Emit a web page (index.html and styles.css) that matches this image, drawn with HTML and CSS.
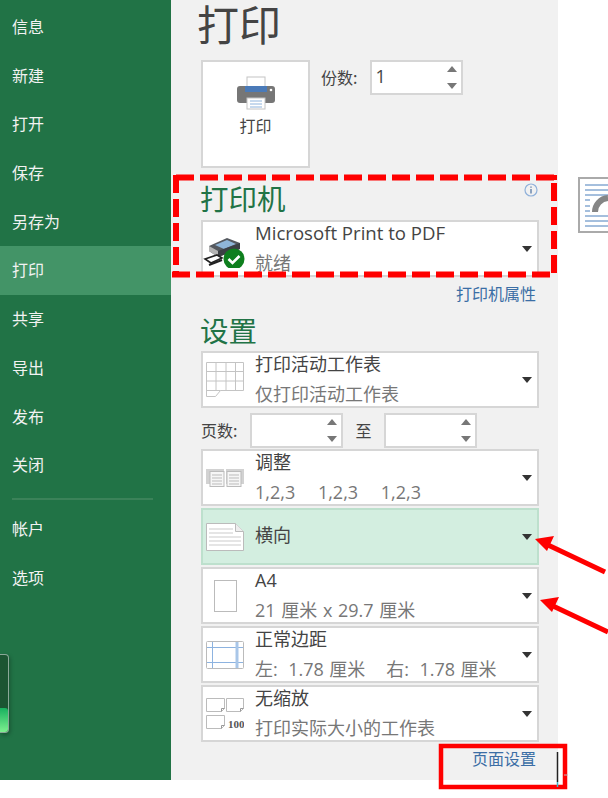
FILE: index.html
```html
<!DOCTYPE html>
<html lang="zh-CN">
<head>
    <meta charset="UTF-8">
    <title>打印</title>
    <link rel="stylesheet" href="styles.css">
</head>
<body>
<div class="window">
    <nav class="side">
        <a>信息</a>
        <a>新建</a>
        <a>打开</a>
        <a>保存</a>
        <a>另存为</a>
        <a class="on">打印</a>
        <a>共享</a>
        <a>导出</a>
        <a>发布</a>
        <a>关闭</a>
        <hr>
        <a>帐户</a>
        <a>选项</a>
    </nav>

    <main class="print">
        <h1>打印</h1>

        <div class="copies">
            <button class="bigbtn">
                <svg width="40" height="34" viewBox="0 0 40 34">
                    <rect x="1" y="10" width="38" height="17" rx="3" fill="#767676"/>
                    <rect x="11" y="1" width="18" height="11" fill="#fff" stroke="#c4c4c4"/>
                    <rect x="9" y="10" width="22" height="6" fill="#4a7ab8"/>
                    <rect x="11" y="22" width="18" height="11" fill="#fff" stroke="#c4c4c4"/>
                    <path d="M14 25h12M14 28h12M14 31h12" stroke="#8fb4dc"/>
                    <circle cx="35" cy="14" r="1.3" fill="#fff"/>
                </svg>
                <span>打印</span>
            </button>
            <label class="lbl">份数:</label>
            <div class="spin wide"><span class="val">1</span><i class="up"></i><i class="down"></i></div>
        </div>

        <div class="head">
            <h2>打印机</h2>
            <svg class="info" width="14" height="14" viewBox="0 0 14 14">
                <circle cx="7" cy="7" r="6" fill="none" stroke="#8fb0da" stroke-width="1.2"/>
                <path d="M7 3.400v1.400M7 6v4.600" stroke="#4a6f9f" stroke-width="1.2"/>
            </svg>
        </div>
        <div class="row tall">
            <span class="ico">
                <svg width="44" height="38" viewBox="0 0 44 38">
                    <path d="M6 16l18-8 13 5v6L15 27 6 21z" fill="#55595f"/>
                    <path d="M12 15l12-5 9 4-12 5z" fill="#8fb5d8"/>
                    <path d="M6 16l9 5v6l-9-6z" fill="#b4b4b4"/>
                    <path d="M15 21l22-8v6L15 27z" fill="#3c3f44"/>
                    <path d="M2 29l12-4 5 3-11 5z" fill="#fff" stroke="#222" stroke-width="1.600"/>
                    <path d="M6 35l13-5" stroke="#222" stroke-width="2"/>
                    <circle cx="31" cy="29" r="10.500" fill="#0e7f1e"/>
                    <path d="M25.500 29l4 4 7-7" fill="none" stroke="#fff" stroke-width="2.600"/>
                </svg>
            </span>
            <span class="txt"><b class="en">Microsoft Print to PDF</b><em>就绪</em></span>
            <i class="caret"></i>
        </div>
        <a class="link props">打印机属性</a>

        <div class="head set"><h2>设置</h2></div>
        <div class="row">
            <span class="ico">
                <svg width="38" height="35" viewBox="0 0 38 35" fill="none" stroke="#c4c4c4">
                    <path d="M.5.500h37v28h-23l-5 6H.5z"/>
                    <path d="M.5 9.500h37M.5 19h37M.5 28.500h14M10 .5v28M20 .5v28M29.500 .5v28"/>
                </svg>
            </span>
            <span class="txt"><b>打印活动工作表</b><em>仅打印活动工作表</em></span>
            <i class="caret"></i>
        </div>

        <div class="pages">
            <label class="lbl">页数:</label>
            <div class="spin"><i class="up"></i><i class="down"></i></div>
            <label class="lbl to">至</label>
            <div class="spin"><i class="up"></i><i class="down"></i></div>
        </div>

        <div class="row">
            <span class="ico">
                <svg width="38" height="18" viewBox="0 0 38 18">
                    <rect x="0" y="0" width="18" height="15" fill="#d2d2d2"/>
                    <rect x="4" y="2.500" width="14" height="15" fill="#f6f6f6" stroke="#bbb"/>
                    <path d="M6 6h10M6 9h10M6 12h10M6 15h10" stroke="#bbb"/>
                    <rect x="20" y="0" width="18" height="15" fill="#d2d2d2"/>
                    <rect x="21" y="2.500" width="14" height="15" fill="#f6f6f6" stroke="#bbb"/>
                    <path d="M23 6h10M23 9h10M23 12h10M23 15h10" stroke="#bbb"/>
                </svg>
            </span>
            <span class="txt"><b>调整</b><em class="sp">1,2,3&nbsp;&nbsp;&nbsp; 1,2,3&nbsp;&nbsp;&nbsp; 1,2,3</em></span>
            <i class="caret"></i>
        </div>
        <div class="row active">
            <span class="ico">
                <svg width="38" height="28" viewBox="0 0 38 28">
                    <path d="M.5.500h29l8 8v19H.5z" fill="#fff" stroke="#bbb"/>
                    <path d="M29.500 .5v8h8" fill="#eee" stroke="#bbb"/>
                    <path d="M3 6h24M3 10h24M3 14h32M3 18h32M3 22h32" stroke="#cbcbcb"/>
                </svg>
            </span>
            <span class="txt"><b>横向</b></span>
            <i class="caret"></i>
        </div>
        <div class="row">
            <span class="ico">
                <svg width="23" height="32" viewBox="0 0 23 32"><rect x=".5" y=".5" width="22" height="31" fill="#fff" stroke="#bbb"/></svg>
            </span>
            <span class="txt"><b>A4</b><em class="sp">21 厘米 x 29.7 厘米</em></span>
            <i class="caret"></i>
        </div>
        <div class="row">
            <span class="ico">
                <svg width="38" height="28" viewBox="0 0 38 28">
                    <rect x=".5" y=".5" width="37" height="27" rx="1" fill="#fff" stroke="#bbb"/>
                    <path d="M1 6.500h36M1 21.500h36M6.500 1v26" stroke="#8db3e0"/>
                    <path d="M31 1v26" stroke="#a9c6e8" stroke-width="3"/>
                </svg>
            </span>
            <span class="txt"><b>正常边距</b><em class="sp-less">左:&nbsp; 1.78 厘米&nbsp;&nbsp;&nbsp; 右:&nbsp; 1.78 厘米</em></span>
            <i class="caret"></i>
        </div>
        <div class="row">
            <span class="ico">
                <svg width="38" height="31" viewBox="0 0 38 31">
                    <path d="M.5.500h18v10l-3 3H.5z" fill="#fff" stroke="#bbb"/>
                    <path d="M20.500 .5h17v10l-3 3h-14z" fill="#fff" stroke="#bbb"/>
                    <path d="M.5 17.500h18v10l-3 3H.5z" fill="#fff" stroke="#bbb"/>
                    <path d="M15.500 13.500v-3h3M34.500 13.500v-3h3M15.500 30.500v-3h3" fill="none" stroke="#999"/>
                    <text x="22" y="30" class="hundred">100</text>
                </svg>
            </span>
            <span class="txt"><b>无缩放</b><em>打印实际大小的工作表</em></span>
            <i class="caret"></i>
        </div>
        <a class="link setup">页面设置</a>
    </main>

    <div class="thumb">
        <svg width="30" height="56" viewBox="0 0 30 56">
            <path d="M0 1h30M0 55h30M1 1v54" stroke="#aaa" stroke-width="2"/>
            <path d="M7 8h23M7 13h23M7 18h23M7 39h23M7 44h23M7 49h23M7 23h5M7 29h5M7 34h5" stroke="#4a7ebb"/>
            <path d="M17 35a14 14 0 0 1 13-14" fill="none" stroke="#858585" stroke-width="6"/>
        </svg>
    </div>
    <div class="gauge"><span></span></div>

    <svg class="marks" width="608" height="798" viewBox="0 0 608 798">
        <g fill="none" stroke="#f00">
            <path class="dash" d="M176 177.500H554"/>
            <path d="M554 177.500H557" stroke-width="5"/>
            <path class="dash" d="M172 274.500H550"/>
            <path class="dash" d="M176 175V272"/>
            <path class="dash" d="M554 183V273"/>
            <rect x="441" y="746" width="124" height="41" stroke-width="4.500"/>
            <path d="M605 572L548 545M608 632L553 606" stroke-width="5"/>
        </g>
        <path d="M535 539l19-3-7 15zM540 600l19-3-7 15z" fill="#f00"/>
        <path d="M557.500 752v30" stroke="#222" stroke-width="1.500"/>
        <path d="M557.500 782v5" stroke="#40b8c8" stroke-width="1.500"/>
        <path d="M564 775h4" stroke="#bbb"/>
    </svg>
</div>
</body>
</html>
```

FILE: styles.css
```css
html, body  { margin:0; padding:0; background:#fff; }
body        { font-family:"Noto Sans CJK SC", "Open Sans", sans-serif; }
.window     { position:relative; display:flex; width:608px; height:798px; overflow:hidden; }

.side       { width:171px; height:780px; flex:none; background:#217346; color:#f2f2f2; padding-top:3px; box-sizing:border-box; }
.side a     { display:block; height:48.700px; line-height:47.500px; padding-left:12px; font-size:16px; }
.side a.on  { background:#439467; }
.side hr    { border:0; height:2px; background:#3b8259; margin:8px 18px 5px 12px; }

.print      { width:387px; height:780px; flex:none; background:#f1f1f1; box-sizing:border-box; padding-left:30px; position:relative; }
h1          { margin:0 0 0 -4px; height:60px; font-size:42px; line-height:46px; font-weight:400; color:#444; }
h2          { margin:0 0 0 -1px; font-size:28.500px; line-height:34px; font-weight:400; color:#217346; }

.copies     { display:flex; align-items:flex-start; height:108px; }
.bigbtn     { width:109px; height:108px; flex:none; background:#fff; border:2px solid #d6d6d6; box-sizing:border-box; padding:14px 0 0; display:flex; flex-direction:column; align-items:center; font:inherit; font-size:16px; color:#444; }
.bigbtn span{ line-height:24px; margin-top:3px; }
.lbl        { font-size:16px; color:#444; line-height:35px; }
.copies .lbl{ margin:0 13px 0 11px; }

.spin       { position:relative; width:93px; height:35px; background:#fff; border:2px solid #d6d6d6; box-sizing:border-box; }
.spin .val  { display:block; font-family:"Open Sans", sans-serif; font-size:18px; line-height:28px; padding-left:3px; color:#444; }
.spin i     { position:absolute; right:4px; width:0; height:0; border-left:5px solid transparent; border-right:5px solid transparent; }
.spin .up   { top:4px; border-bottom:6px solid #777; }
.spin .down { bottom:4px; border-top:6px solid #777; }

.head       { display:flex; justify-content:space-between; align-items:flex-start; width:338px; height:52px; padding-top:13px; box-sizing:border-box; }
.head.set   { height:44px; padding-top:6px; }
.info       { margin:2px 1px 0 0; }

.row        { display:flex; align-items:center; width:338px; height:57px; background:#fff; border:2px solid #d6d6d6; box-sizing:border-box; margin-bottom:2px; }
.row.tall   { margin-bottom:0; }
.row.active { background:#d3eee0; border-color:#bde0cd; }
.ico        { width:40px; flex:none; display:flex; justify-content:center; align-items:center; margin:0 10px 0 2px; }
.ico svg    { flex:none; }
.txt        { flex:1; display:flex; flex-direction:column; font-size:18px; line-height:29px; font-family:"Open Sans", "Noto Sans CJK SC", sans-serif; }
.txt b      { font-weight:400; color:#444; margin:-1px 0 1px; }
.txt b.en   { font-size:18.600px; margin:-2px 0 2px; }
.txt em     { font-style:normal; color:#777; }
.txt em.sp  { word-spacing:1px; }
.txt em.sp-less { word-spacing:.6px; }
.caret      { width:0; height:0; margin-right:5px; border-left:5.500px solid transparent; border-right:5.500px solid transparent; border-top:6px solid #333; }
.hundred    { font-family:"Liberation Serif", serif; font-size:11px; fill:#555; font-weight:700; }

.link       { display:block; width:335px; text-align:right; font-size:16px; color:#3b6ea5; }
.props      { height:30px; line-height:32px; }
.setup      { margin-top:4px; line-height:24px; }

.pages      { display:flex; align-items:flex-start; height:36px; margin:5px 0 0; }
.pages .lbl { width:49px; }
.pages .to  { width:41px; text-align:center; }

.thumb      { position:absolute; left:578px; top:177px; }
.gauge      { position:absolute; left:0; top:654px; width:9px; height:79px; background:#1b5532; border:solid #8aa898; border-width:1px 1px 1px 0; border-radius:0 4px 4px 0; box-sizing:border-box; box-shadow:1px 2px 4px rgba(0,0,0,.3); display:flex; align-items:flex-end; }
.gauge span { display:block; width:100%; height:24px; background:linear-gradient(#18b15f, #7df08f); border-radius:0 3px 3px 0; }

.marks      { position:absolute; left:0; top:0; pointer-events:none; }
.dash       { stroke-width:6; stroke-dasharray:18 6; }
```
